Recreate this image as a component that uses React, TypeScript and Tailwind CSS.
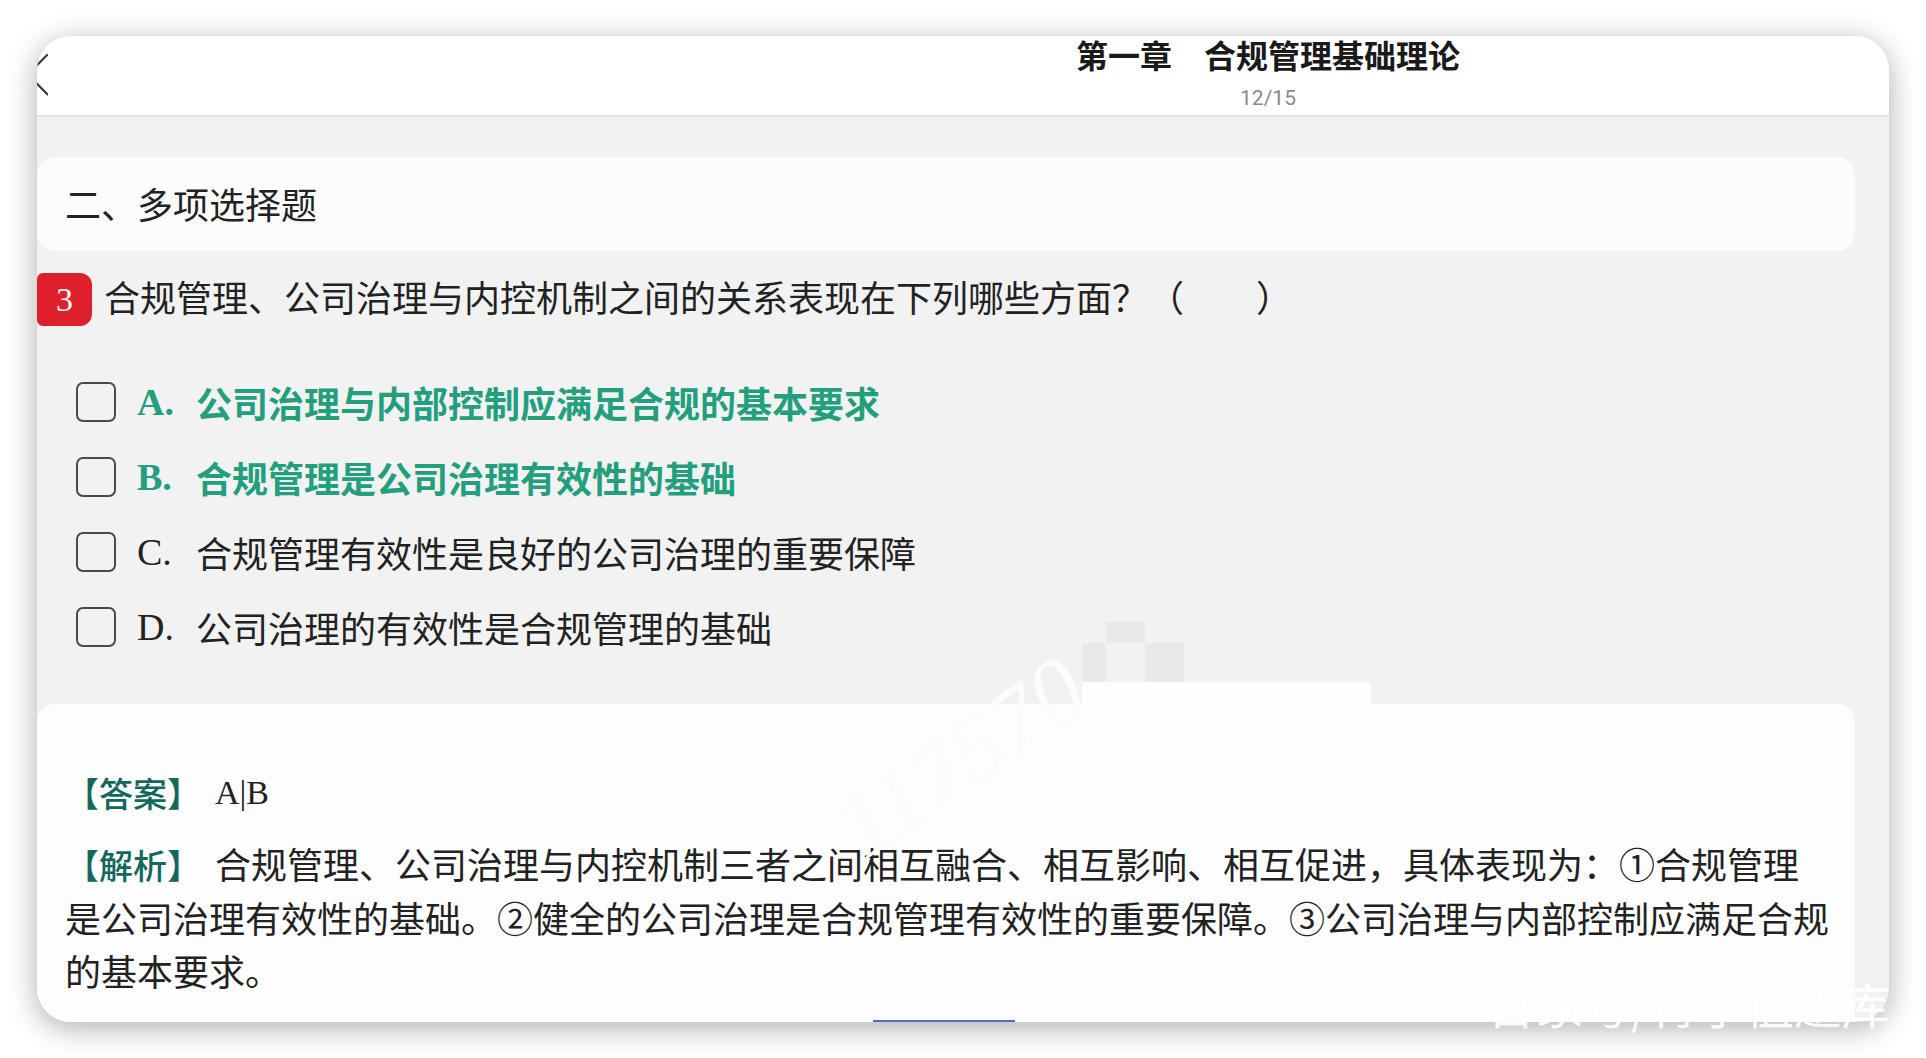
const cjk = "font-['Noto_Sans_CJK_SC','Noto_Sans',sans-serif]"
const serif = "font-['Liberation_Serif','Noto_Serif_CJK_SC',serif]"

const options = [
  { key: 'A', text: '公司治理与内部控制应满足合规的基本要求', correct: true },
  { key: 'B', text: '合规管理是公司治理有效性的基础', correct: true },
  { key: 'C', text: '合规管理有效性是良好的公司治理的重要保障', correct: false },
  { key: 'D', text: '公司治理的有效性是合规管理的基础', correct: false },
]

const OptionRow = ({ opt }: { opt: (typeof options)[number] }) => (
  <div className="flex h-[75px] items-center pl-[39px]">
    <div className="h-10 w-10 shrink-0 rounded-[7px] border-2 border-[#4a4a4a]" />
    <span
      className={`ml-[21px] w-[59px] shrink-0 text-[38px] leading-none ${serif} ${
        opt.correct ? 'font-bold text-[#239f7e]' : 'text-[#222]'
      }`}
    >
      {opt.key}.
    </span>
    <span
      className={`text-[36px] leading-none ${opt.correct ? 'font-bold text-[#239f7e]' : 'text-[#222]'}`}
    >
      {opt.text}
    </span>
  </div>
)

export default function App() {
  return (
    <div className={`relative h-[1058px] w-[1926px] overflow-hidden bg-white pl-[37px] pt-[36px] ${cjk}`}>
      <div className="relative flex h-[986px] w-[1852px] flex-col overflow-hidden rounded-[34px] bg-[#f2f2f2] shadow-[0_6px_30px_rgba(0,0,0,0.32)]">
        {/* header */}
        <div className="flex h-[81px] shrink-0 border-b-2 border-[#e2e2e2] bg-white">
          <svg className="-ml-[9px] mt-[18px] shrink-0" width="20" height="42" viewBox="0 0 20 42" fill="none">
            <path d="M20 0 L0 20.5 L20 41" stroke="#333" strokeWidth="2" />
          </svg>
          <div className="flex flex-1 flex-col items-center pl-[599px]">
            <div className="text-[32px] font-bold leading-[36px] text-[#1a1a1a]">第一章　合规管理基础理论</div>
            <div className="mt-[14px] font-['Roboto','Liberation_Sans',sans-serif] text-[21px] leading-[24px] text-[#8a8a8a]">
              12/15
            </div>
          </div>
        </div>

        {/* body */}
        <div className="flex flex-1 flex-col pr-[34px]">
          <div className="mt-[40px] flex h-[94px] items-center rounded-[18px] bg-[#fcfcfc] pb-[3px] pl-[28px] text-[36px] text-[#222]">
            二、多项选择题
          </div>

          <div className="mt-[22px] flex items-center">
            <div className={`flex h-[53px] w-[55px] items-center justify-center rounded-[12px] rounded-l-[6px] bg-[#de1f2c] text-[34px] text-white ${serif}`}>
              3
            </div>
            <div className="ml-[12px] pb-[7px] text-[36px] leading-none text-[#222]">
              合规管理、公司治理与内控机制之间的关系表现在下列哪些方面？（　　）
            </div>
          </div>

          <div className="mt-[38px] flex flex-col">
            {options.map((opt) => (
              <OptionRow key={opt.key} opt={opt} />
            ))}
          </div>

          <div className="relative mt-[40px] flex-1 overflow-hidden rounded-t-[18px] bg-[#fdfdfd] pl-[28px] pr-[20px] pt-[61px] text-[36px] text-[#222]">
            <div
              className={`pointer-events-none absolute left-[835px] top-[76px] origin-bottom-left -rotate-[34deg] text-[95px] leading-none text-[#efefef] italic ${serif}`}
            >
              117570
            </div>
            <div className="relative flex h-[54px] items-center">
              <span className="inline-block w-[150px] text-[34px] font-medium text-[#13675c]">【答案】</span>
              <span className={`text-[34px] ${serif}`}>A|B</span>
            </div>
            <div className="relative mt-[18px] leading-[53px]">
              <span className="inline-block w-[150px] text-[34px] font-medium text-[#13675c]">【解析】</span>
              合规管理、公司治理与内控机制三者之间相互融合、相互影响、相互促进，具体表现为：①合规管理
              <br />
              是公司治理有效性的基础。②健全的公司治理是合规管理有效性的重要保障。③公司治理与内部控制应满足合规
              <br />
              的基本要求。
            </div>
          </div>
        </div>

        {/* watermark and mosaic left by the screenshot */}
        <div
          className={`pointer-events-none absolute left-[835px] top-[744px] origin-bottom-left -rotate-[34deg] text-[95px] leading-none text-[#fcfcfc] italic ${serif}`}
        >
          117570
        </div>
        <div className="absolute left-[1069px] top-[586px] h-[21px] w-[39px] bg-[#e9e9e9]" />
        <div className="absolute left-[1045px] top-[607px] h-[39px] w-[24px] bg-[#e9e9e9]" />
        <div className="absolute left-[1108px] top-[607px] h-[39px] w-[39px] bg-[#e9e9e9]" />
        <div className="absolute left-[1045px] top-[646px] h-[23px] w-[289px] bg-[#fdfdfd]" />
        <div className="absolute bottom-0 left-[836px] h-[2px] w-[142px] bg-[#4a72b5]" />
      </div>

      <div className="pointer-events-none absolute left-[1487px] top-[979px] text-[48px] leading-none text-white/90">
        百家号/青小值题库
      </div>
    </div>
  )
}
